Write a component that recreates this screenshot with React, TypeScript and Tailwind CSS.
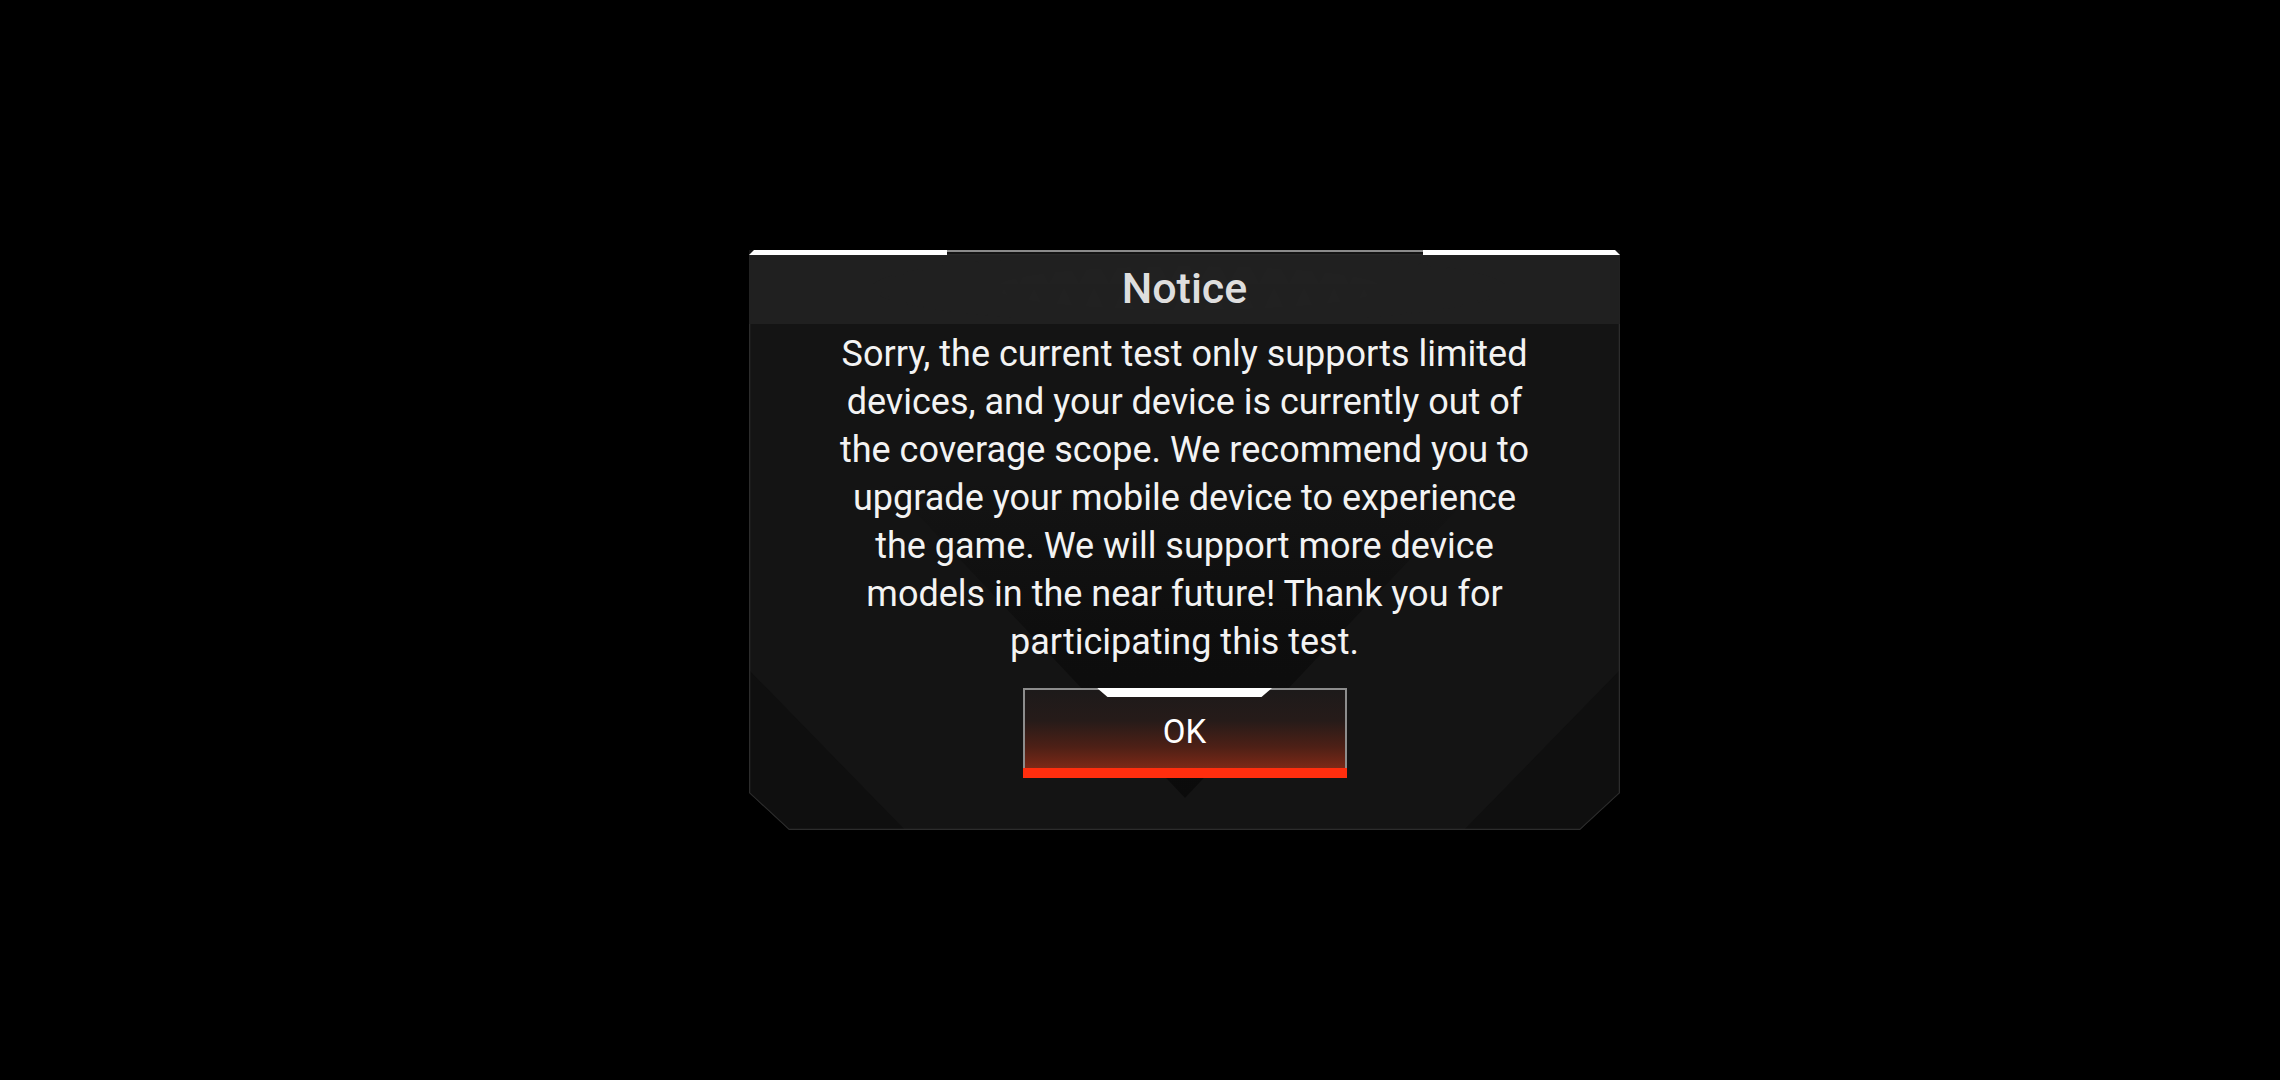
import React from 'react';

const LINES = [
  'Sorry, the current test only supports limited',
  'devices, and your device is currently out of',
  'the coverage scope. We recommend you to',
  'upgrade your mobile device to experience',
  'the game. We will support more device',
  'models in the near future! Thank you for',
  'participating this test.',
];

const FONT = { fontFamily: 'Roboto, "Noto Sans", sans-serif' };

function Backdrop() {
  return (
    <svg className="pointer-events-none absolute inset-0" width="871" height="580" viewBox="0 0 871 580">
      <defs>
        <linearGradient id="vfade" x1="0" y1="0" x2="0" y2="1">
          <stop offset="0" stopColor="#0c0c0c" stopOpacity="0" />
          <stop offset="0.5" stopColor="#0c0c0c" stopOpacity="0.8" />
          <stop offset="1" stopColor="#0b0b0b" stopOpacity="1" />
        </linearGradient>
        <pattern id="tri" width="30" height="34" patternUnits="userSpaceOnUse">
          <path d="M0 34 L15 4 L30 34 Z" fill="#313131" />
        </pattern>
        <radialGradient id="trimask-g" cx="0.5" cy="0.5" r="0.5">
          <stop offset="0" stopColor="#fff" stopOpacity="1" />
          <stop offset="1" stopColor="#fff" stopOpacity="0" />
        </radialGradient>
        <mask id="trimask">
          <rect x="120" y="2" width="640" height="72" fill="url(#trimask-g)" />
        </mask>
      </defs>
      <polygon points="136,230 736,230 436,548" fill="url(#vfade)" />
      <polygon points="0,420 0,543 40,580 156,580" fill="#0f0f0f" />
      <polygon points="871,420 871,543 831,580 715,580" fill="#0f0f0f" />
      <rect x="120" y="5" width="640" height="68" fill="url(#tri)" mask="url(#trimask)" opacity="0.85" />
      <polygon
        points="0.5,5 0.5,543 40,579.5 831,579.5 870.5,543 870.5,5"
        fill="none"
        stroke="#2c2c2c"
        strokeWidth="1.5"
      />
    </svg>
  );
}

function OkButton() {
  return (
    <button
      className="relative mx-auto flex h-[90px] w-[324px] items-center justify-center border-x-2 border-t-2 border-[#8d8d8d] bg-[linear-gradient(to_bottom,#1d1a1a_0%,#261b19_35%,#4e2016_65%,#922d17_100%)]"
      style={FONT}
    >
      <span className="absolute left-1/2 top-[-2px] h-[9px] w-[175px] -translate-x-1/2 bg-white [clip-path:polygon(0_0,100%_0,94%_100%,6%_100%)]" />
      <span className="pb-[6px] text-[33px] font-normal leading-none text-white">OK</span>
      <span className="absolute bottom-0 left-[-2px] right-[-2px] h-[10px] bg-[#ff2e0e]" />
    </button>
  );
}

export default function App() {
  return (
    <div className="flex h-[1080px] w-[2280px] items-center bg-black pl-[749px]">
      <div className="relative h-[580px] w-[871px] bg-[#141414] [clip-path:polygon(0_0,100%_0,100%_calc(100%-37px),calc(100%-40px)_100%,40px_100%,0_calc(100%-37px))]">
        <Backdrop />
        <div className="relative flex flex-col">
          <div className="flex h-[5px]">
            <div className="h-[5px] w-[198px] bg-white [clip-path:polygon(5px_0,100%_0,100%_100%,0_100%,0_5px)]" />
            <div className="h-[2px] flex-1 bg-[#8a8a8a]" />
            <div className="h-[5px] w-[197px] bg-white [clip-path:polygon(0_0,calc(100%-5px)_0,100%_5px,100%_100%,0_100%)]" />
          </div>
          <div className="flex h-[69px] items-center justify-center bg-[#212121]/90">
            <h1 className="pb-[2px] text-[43px] font-medium leading-none text-[#dedede]" style={FONT}>
              Notice
            </h1>
          </div>
          <div className="mt-[6px] flex flex-col items-center text-[36px] leading-[48px] text-[#f3f3f3]" style={FONT}>
            {LINES.map((l) => (
              <p key={l}>{l}</p>
            ))}
          </div>
          <div className="mt-[22px] flex">
            <OkButton />
          </div>
        </div>
      </div>
    </div>
  );
}
